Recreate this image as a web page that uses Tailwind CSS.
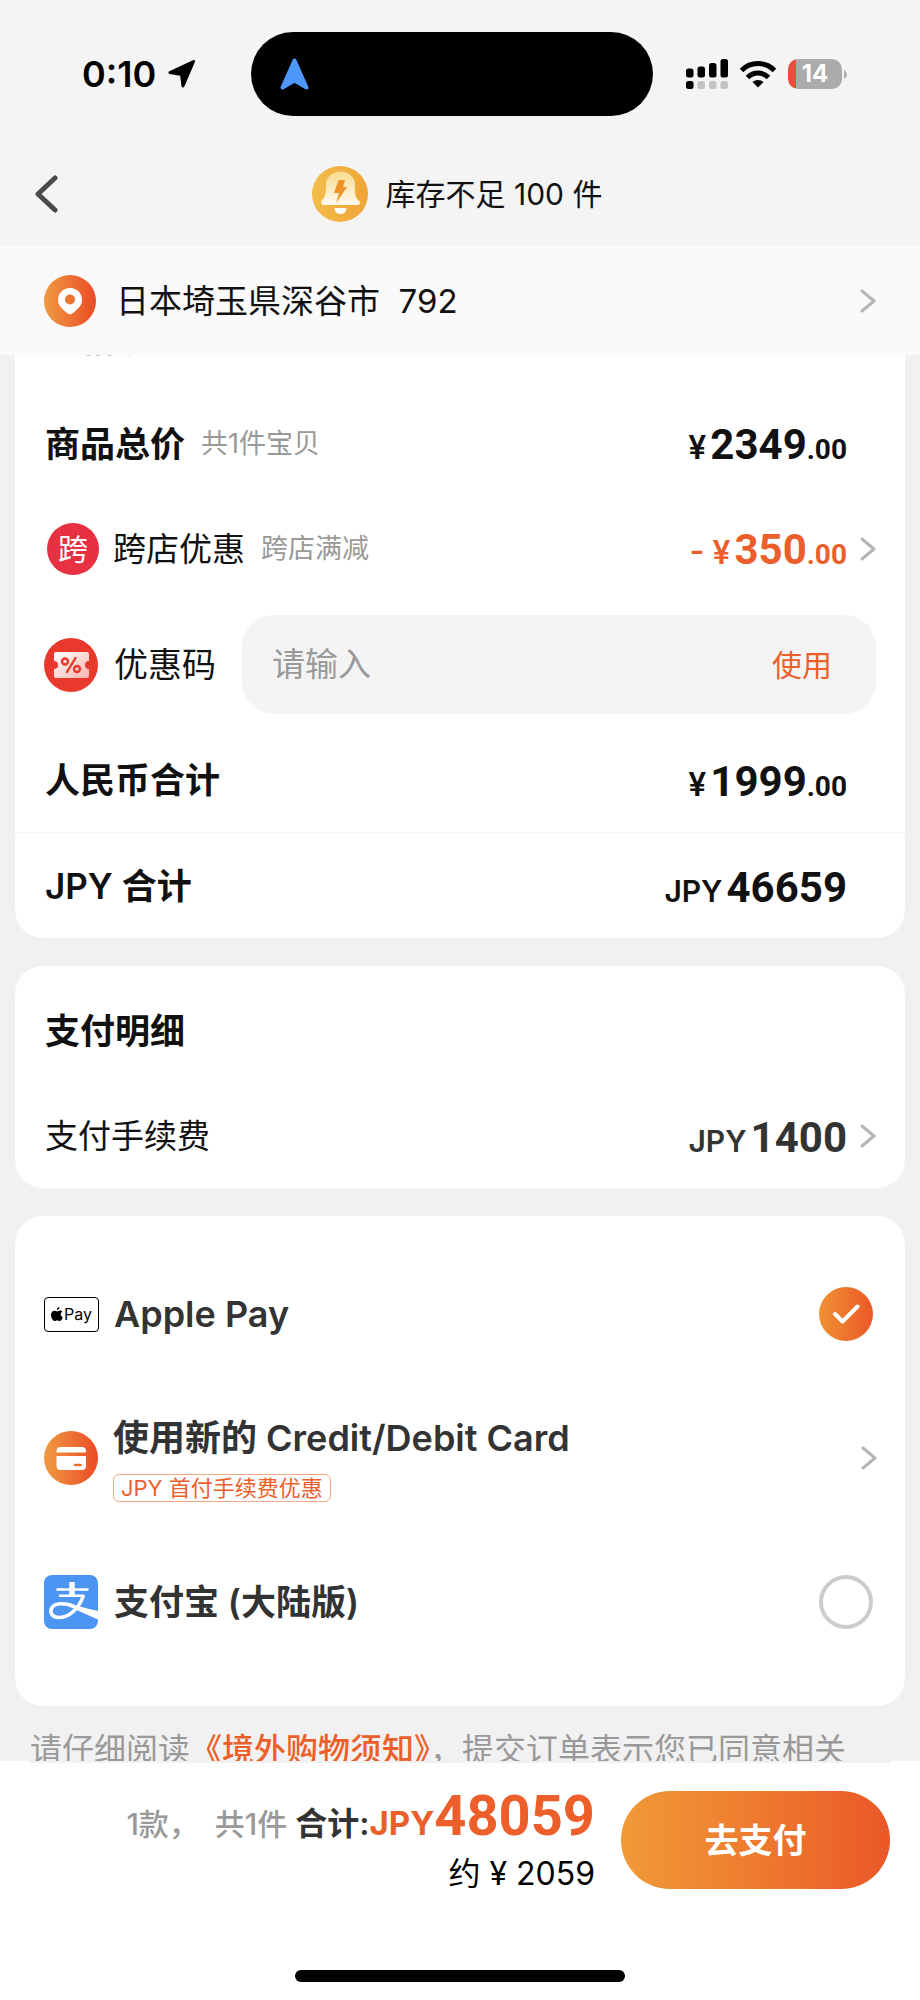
<!DOCTYPE html>
<html lang="zh-CN">
<head>
    <meta charset="UTF-8">
    <meta name="viewport" content="width=device-width, initial-scale=1.0">
    <title>确认订单</title>
    <script src="https://cdn.jsdelivr.net/npm/@tailwindcss/browser@4"></script>
</head>
<body class="flex h-screen flex-col overflow-hidden bg-[#f1f1f1] font-['Inter','Noto_Sans_CJK_SC',sans-serif] text-[#111]">

    <!-- Status bar -->
    <div class="flex shrink-0 items-center bg-[#f4f4f4] pt-8">
        <div class="flex w-[251px] items-center gap-3 pl-[82px]">
            <span class="text-[36px] leading-none font-semibold text-black">0:10</span>
            <svg class="size-7" viewBox="0 0 28 28"><path d="M25.500 1.500 2 12.500 13.500 14.500 15 26Z" fill="#000" stroke="#000" stroke-width="3" stroke-linejoin="round"/></svg>
        </div>
        <div class="flex h-[84px] w-[402px] items-center rounded-full bg-black pl-[29px]">
            <svg class="h-8 w-[29px]" viewBox="0 0 29 32"><path d="M14.500 2.500 26.500 29.500 14.500 22.500 2.500 29.500Z" fill="#4f98fb" stroke="#4f98fb" stroke-width="4" stroke-linejoin="round"/></svg>
        </div>
        <div class="flex flex-1 items-center gap-3 pl-[33px]">
            <svg class="h-[30px] w-[42px]" viewBox="0 0 42 30">
                <rect x="0" y="9.500" width="7.500" height="9" rx="2.500"/>
                <rect x="11.500" y="7.500" width="7.500" height="11" rx="2.500"/>
                <rect x="23" y="4" width="7.500" height="14.500" rx="2.500"/>
                <rect x="34.500" y="0" width="7.500" height="18.500" rx="2.500"/>
                <rect x="0" y="22" width="7.500" height="8" rx="2.500"/>
                <g fill="#c4c4c4">
                    <rect x="11.500" y="22" width="7.500" height="8" rx="2.500"/>
                    <rect x="23" y="22" width="7.500" height="8" rx="2.500"/>
                    <rect x="34.500" y="22" width="7.500" height="8" rx="2.500"/>
                </g>
            </svg>
            <svg class="h-[28px] w-[36px]" viewBox="0 0 36 28" fill="none" stroke="#000" stroke-width="5">
                <path d="M1.500 10.500C10.500 1.200 25.500 1.200 34.500 10.500"/>
                <path d="M7.500 17.500C13.500 11.500 22.500 11.500 28.500 17.500"/>
                <path d="M12.500 22C15.500 19.300 20.500 19.300 23.500 22L18 27.500Z" fill="#000" stroke="none"/>
            </svg>
            <div class="flex items-center gap-[2px]">
                <div class="flex h-[30px] w-[54px] items-center justify-center rounded-[10px] bg-linear-to-r from-[#eb4e3d] from-15% to-[#ababab] to-15% text-[24px] leading-none font-bold text-white">14</div>
                <svg class="h-[9px] w-[3px]" viewBox="0 0 3 9"><path d="M0 0Q3 2 3 4.500T0 9Z" fill="#ababab"/></svg>
            </div>
        </div>
    </div>

    <!-- Nav bar -->
    <header class="flex h-[130px] shrink-0 items-center bg-[#f4f4f4] pt-[26px] pr-10 pl-[34px]">
        <button type="button" aria-label="返回" class="flex w-14">
            <svg class="h-[38px] w-6" viewBox="0 0 24 38" fill="none" stroke="#4a4a4a" stroke-width="5" stroke-linecap="round" stroke-linejoin="round"><path d="M21 3 4 19 21 35"/></svg>
        </button>
        <div class="flex flex-1 items-center justify-center gap-[18px]">
            <svg class="size-[56px]" viewBox="0 0 56 56">
                <defs>
                    <linearGradient id="bellBg" x1="0" x2="1"><stop offset="0" stop-color="#f3bd4c"/><stop offset="1" stop-color="#efa436"/></linearGradient>
                    <linearGradient id="bellFg" x1="0" y1="0" x2="0" y2="1"><stop offset="0" stop-color="#f9d98c"/><stop offset="1" stop-color="#fffaf0"/></linearGradient>
                </defs>
                <circle cx="28" cy="28" r="28" fill="url(#bellBg)"/>
                <path d="M12 39H45C49 39 49 36 46 34C43 31 43 27 43 19C43 1 14 1 14 19C14 27 13 31 11 33C8 36 9 39 12 39Z" fill="url(#bellFg)"/>
                <path d="M22.500 42H34.500C34.500 50 22.500 50 22.500 42Z" fill="#fff"/>
                <path d="M26.500 14H33L31 21H35L24 37L27 27H22Z" fill="#ee9426"/>
            </svg>
            <h1 class="text-[30px] leading-10">库存不足 100 件</h1>
        </div>
        <div class="w-14"></div>
    </header>

    <!-- Address -->
    <a href="#" class="flex h-[109px] shrink-0 items-center bg-[#fafafa] px-[44px]">
        <svg class="size-[52px]" viewBox="0 0 52 52">
            <defs><linearGradient id="orange" x1="0" x2="1"><stop offset="0" stop-color="#f09b43"/><stop offset="1" stop-color="#ea4b25"/></linearGradient></defs>
            <circle cx="26" cy="26" r="26" fill="url(#orange)"/>
            <path d="M26 13C19 13 14 18 14 25C14 30 17 33 23 38Q26 40.500 29 38C35 33 38 30 38 25C38 18 33 13 26 13Z" fill="#fff"/>
            <circle cx="26" cy="24.500" r="5" fill="#ed7433"/>
        </svg>
        <span class="ml-5 flex-1 text-[33px] leading-10">日本埼玉県深谷市&nbsp; 792</span>
        <svg class="h-6 w-4" viewBox="0 0 16 24" fill="none" stroke="#b5b5b5" stroke-width="3" stroke-linecap="round" stroke-linejoin="round"><path d="M2 2 14 12 2 22"/></svg>
    </a>

    <main class="min-h-0 flex-1 overflow-hidden px-[15px]">

        <!-- Price details, scrolled partly under the address bar -->
        <section class="-mt-[81px] rounded-[28px] bg-white">
            <h2 class="flex h-[117px] items-center px-[30px] pt-3 text-[35px] leading-10 font-semibold">价格明细</h2>

            <div class="flex h-[105px] items-center pr-[58px] pl-[30px]">
                <span class="text-[35px] leading-10 font-semibold">商品总价</span>
                <span class="ml-4 flex-1 text-[27px] leading-10 text-[#999]">共1件宝贝</span>
                <span class="flex items-baseline pt-2 leading-10 font-bold"><span class="mr-1 text-[32px] font-semibold">¥</span><span class="font-[Roboto] text-[42px]">2349</span><span class="font-[Roboto] text-[28px]">.00</span></span>
            </div>

            <a href="#" class="flex h-[105px] items-center pr-[29px] pl-8">
                <span class="flex size-[52px] items-center justify-center rounded-full bg-[#e83043] text-[30px] leading-none text-white">跨</span>
                <span class="ml-[14px] text-[33px] leading-10">跨店优惠</span>
                <span class="ml-4 flex-1 text-[27px] leading-10 text-[#999]">跨店满减</span>
                <span class="flex items-baseline pt-2 leading-10 font-bold text-[#ec5f2a]"><span class="mr-1 text-[32px] font-semibold">- ¥</span><span class="font-[Roboto] text-[42px]">350</span><span class="font-[Roboto] text-[28px]">.00</span></span>
                <svg class="ml-[13px] h-6 w-4" viewBox="0 0 16 24" fill="none" stroke="#b5b5b5" stroke-width="3" stroke-linecap="round" stroke-linejoin="round"><path d="M2 2 14 12 2 22"/></svg>
            </a>

            <div class="flex h-[127px] items-center px-[29px]">
                <svg class="size-[54px]" viewBox="0 0 54 54">
                    <defs><linearGradient id="ticket" x1="0" y1="0" x2="1" y2="1"><stop offset="0" stop-color="#fff"/><stop offset="1" stop-color="#f6b4ae"/></linearGradient></defs>
                    <circle cx="27" cy="27" r="27" fill="#e8392c"/>
                    <path d="M12 14H43Q45 14 45 16V23A4 4 0 0 0 45 31V38Q45 40 43 40H12Q10 40 10 38V31A4 4 0 0 0 10 23V16Q10 14 12 14Z" fill="url(#ticket)"/>
                    <g fill="none" stroke="#e8392c" stroke-width="2.400" stroke-linecap="round"><circle cx="21" cy="23.500" r="3"/><circle cx="33" cy="31" r="3"/><path d="M31.500 20 23 34"/></g>
                </svg>
                <label for="code" class="ml-4 text-[34px] leading-10">优惠码</label>
                <div class="ml-[26px] flex h-[99px] min-w-0 flex-1 items-center rounded-[32px] bg-[#f4f4f4] pr-[44px] pl-[30px]">
                    <input id="code" type="text" placeholder="请输入" class="h-12 min-w-0 flex-1 bg-transparent text-[33px] outline-none placeholder:text-[#999]">
                    <button type="button" class="text-[30px] leading-10 text-[#ec5f2a]">使用</button>
                </div>
            </div>

            <div class="flex h-[105px] items-center border-b border-[#f5f5f5] pr-[58px] pl-[30px]">
                <span class="flex-1 text-[35px] leading-10 font-semibold">人民币合计</span>
                <span class="flex items-baseline pt-2 leading-10 font-bold"><span class="mr-1 text-[32px] font-semibold">¥</span><span class="font-[Roboto] text-[42px]">1999</span><span class="font-[Roboto] text-[28px]">.00</span></span>
            </div>

            <div class="flex h-[105px] items-center pr-[58px] pl-[30px]">
                <span class="flex-1 text-[35px] leading-10 font-semibold">JPY 合计</span>
                <span class="flex items-baseline gap-1 pt-2 leading-10"><span class="text-[30px] font-semibold">JPY</span><span class="font-[Roboto] text-[42px] font-bold">46659</span></span>
            </div>
        </section>

        <!-- Payment details -->
        <section class="mt-7 rounded-[28px] bg-white">
            <h2 class="flex h-[117px] items-center px-[30px] pt-3 text-[35px] leading-10 font-semibold">支付明细</h2>
            <a href="#" class="flex h-[105px] items-center pr-[29px] pl-[30px]">
                <span class="flex-1 text-[33px] leading-10">支付手续费</span>
                <span class="flex items-baseline gap-1 pt-2 leading-10 text-[#333]"><span class="text-[30px] font-semibold">JPY</span><span class="font-[Roboto] text-[42px] font-bold">1400</span></span>
                <svg class="ml-[13px] h-6 w-4" viewBox="0 0 16 24" fill="none" stroke="#b5b5b5" stroke-width="3" stroke-linecap="round" stroke-linejoin="round"><path d="M2 2 14 12 2 22"/></svg>
            </a>
        </section>

        <!-- Payment methods -->
        <section class="mt-7 rounded-[28px] bg-white pt-[26px] pb-8 text-[#333]">
            <label class="flex h-36 items-center pr-8 pl-[29px]">
                <span class="flex h-[35px] w-[55px] items-center justify-center gap-px rounded-[4px] border border-black text-black">
                    <svg class="h-[14px] w-3" viewBox="0 0 12 14"><path d="M8.500 0C8.600 1.700 7.300 3.100 5.900 3.100C5.700 1.500 7 .2 8.500 0ZM11.400 4.800C9 6.200 9.400 9.200 11.800 10.200C11 12.200 9.900 14 8.600 14C7.600 14 7.300 13.400 6.100 13.400C4.900 13.400 4.500 14 3.600 14C2 14 0 10.800 0 8C0 5.200 1.700 3.700 3.500 3.700C4.600 3.700 5.500 4.400 6.200 4.400C6.900 4.400 7.900 3.600 9.200 3.600C9.900 3.600 10.900 4 11.400 4.800Z"/></svg>
                    <span class="text-[16px] leading-none">Pay</span>
                </span>
                <span class="ml-[15px] flex-1 text-[36px] leading-10 font-semibold">Apple Pay</span>
                <span class="grid place-items-center">
                    <input type="radio" name="pay" checked class="col-start-1 row-start-1 size-[54px] appearance-none rounded-full border-4 border-[#ccc] checked:border-0 checked:bg-linear-to-r checked:from-[#ef9035] checked:to-[#ea5727]">
                    <svg class="col-start-1 row-start-1 h-5 w-7" viewBox="0 0 28 20" fill="none" stroke="#fff" stroke-width="4" stroke-linecap="round" stroke-linejoin="round"><path d="M3 10 10.500 17.500 25.500 2.500"/></svg>
                </span>
            </label>

            <a href="#" class="flex h-36 items-center pr-7 pl-[29px]">
                <svg class="size-[54px]" viewBox="0 0 54 54">
                    <circle cx="27" cy="27" r="27" fill="url(#orange)"/>
                    <path d="M12.500 21.500V20Q12.500 16 16.500 16H38Q42 16 42 20V21.500ZM12.500 25H42V35Q42 39 38 39H16.500Q12.500 39 12.500 35Z" fill="#fff"/>
                    <path d="M31 34H36.500" stroke="#ec6c31" stroke-width="2.500" stroke-linecap="round"/>
                </svg>
                <span class="ml-[15px] flex flex-1 flex-col items-start gap-4 pt-1">
                    <span class="text-[36px] leading-10 font-semibold">使用新的 Credit/Debit Card</span>
                    <span class="flex h-7 items-center rounded-[6px] border border-[#f6a586] px-[7px] text-[22px] leading-none text-[#ec5f2a]">JPY 首付手续费优惠</span>
                </span>
                <svg class="h-6 w-4" viewBox="0 0 16 24" fill="none" stroke="#b5b5b5" stroke-width="3" stroke-linecap="round" stroke-linejoin="round"><path d="M2 2 14 12 2 22"/></svg>
            </a>

            <label class="flex h-36 items-center pr-8 pl-[29px]">
                <svg class="size-[54px] rounded-[8px]" viewBox="0 0 54 54" fill="none" stroke="#fff">
                    <rect width="54" height="54" fill="#4d95f3" stroke="none"/>
                    <path d="M28 7V20" stroke-width="5.500"/>
                    <path d="M12.500 14.500H44.500M15 20.700H40" stroke-width="2.600"/>
                    <path d="M39.500 20C36 32 26 42.500 15.500 42.500C8 42.500 5 37.500 8 32.500C11 28 20 27.500 29 31" stroke-width="3.500"/>
                    <path d="M26 28.500Q40 33 54 36V44.500Q40 38.500 25 31.500Z" fill="#fff" stroke="none"/>
                </svg>
                <span class="ml-4 flex-1 text-[35px] leading-10 font-semibold">支付宝 (大陆版)</span>
                <input type="radio" name="pay" class="size-[54px] appearance-none rounded-full border-4 border-[#ccc] checked:border-0 checked:bg-linear-to-r checked:from-[#ef9035] checked:to-[#ea5727]">
            </label>
        </section>

        <p class="px-[15px] pt-6 text-[32px] leading-10 text-[#999]">请仔细阅读<a href="#" class="font-medium text-[#ec5f2a]">《境外购物须知》</a>，提交订单表示您已同意相关</p>
    </main>

    <!-- Checkout bar -->
    <footer class="flex h-[239px] shrink-0 flex-col items-center bg-white">
        <div class="w-full px-[30px]"><div class="h-[2px] bg-[#f1f1f1]"></div></div>
        <div class="flex w-full items-center justify-end gap-[26px] pt-[23px] pr-[30px]">
            <div class="flex flex-col items-end">
                <div class="flex items-baseline leading-[60px]">
                    <span class="text-[30px] font-medium text-[#999]">1款，&nbsp; 共1件</span>
                    <span class="ml-2 text-[32px] font-semibold text-[#333]">合计:</span>
                    <span class="text-[33px] font-bold text-[#ec5f2a]">JPY</span>
                    <span class="font-[Roboto] text-[56px] font-bold text-[#ec5f2a]">48059</span>
                </div>
                <span class="text-[32px] leading-10 text-black">约 ¥ 2059</span>
            </div>
            <button type="button" class="h-[98px] w-[269px] rounded-full bg-linear-to-r from-[#f09a37] to-[#ea5727] text-[34px] font-semibold text-white">去支付</button>
        </div>
        <div class="mt-auto mb-[18px] h-3 w-[330px] rounded-full bg-black"></div>
    </footer>
</body>
</html>
